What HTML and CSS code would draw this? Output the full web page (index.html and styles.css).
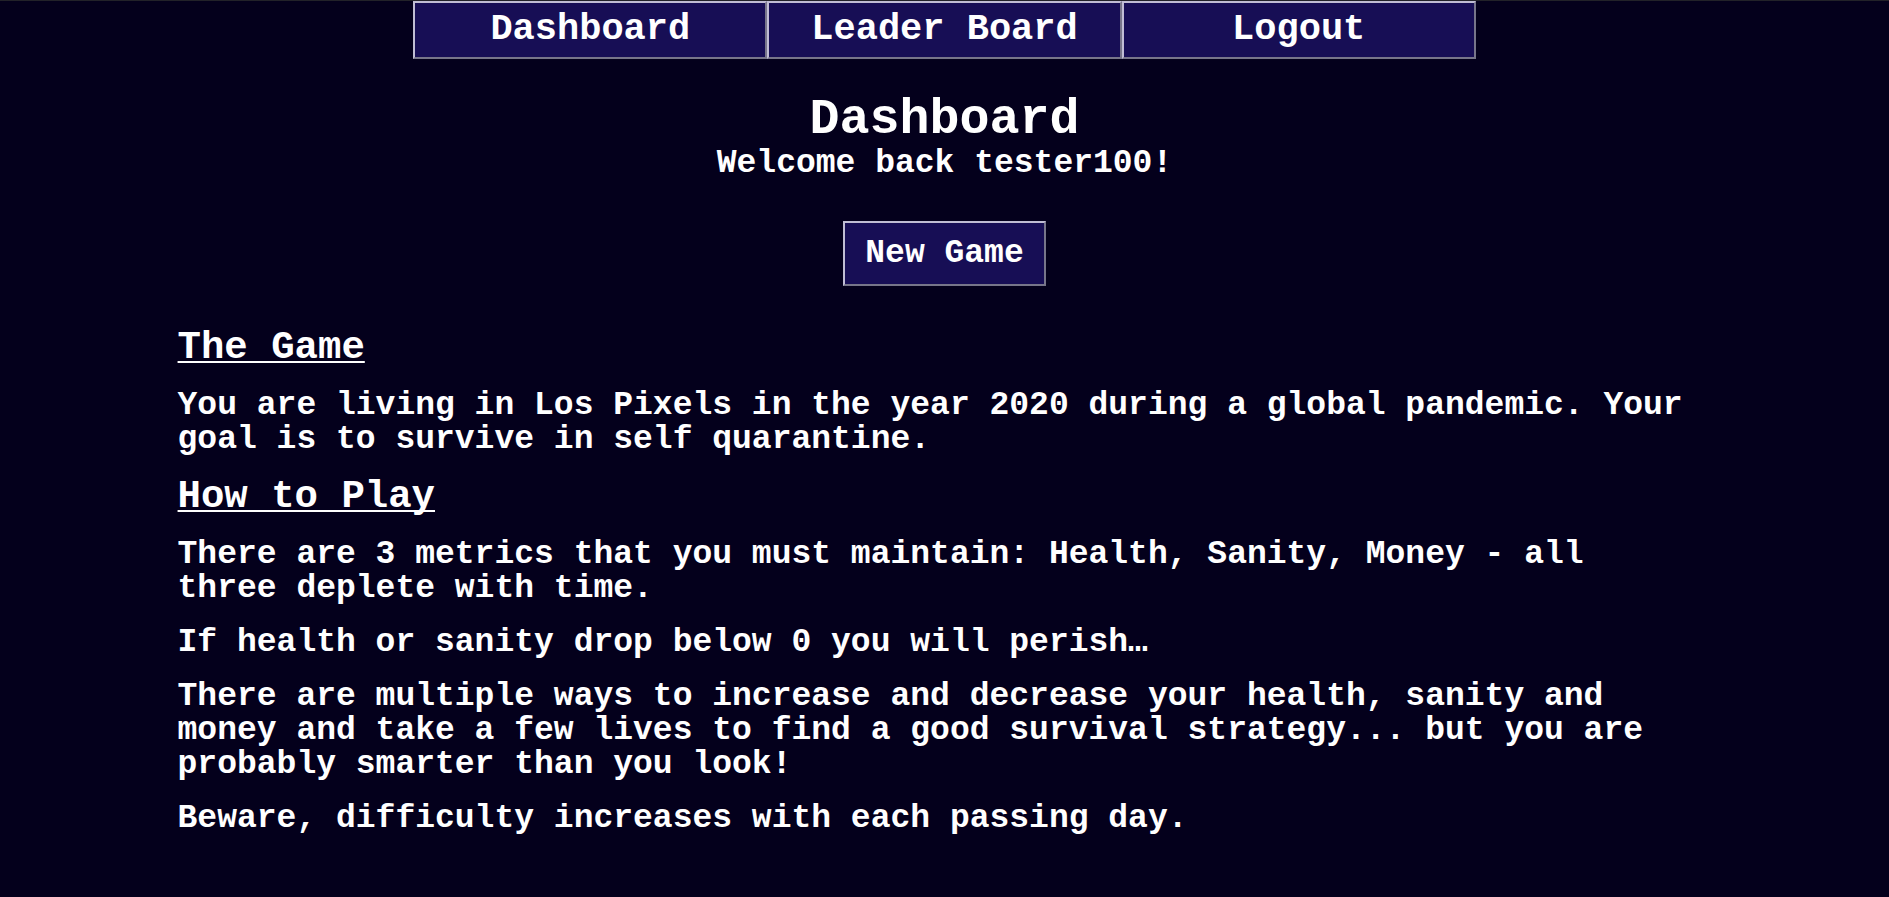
FILE: index.html
```html
<!DOCTYPE html>
<html lang="en">
<head>
<meta charset="utf-8">
<meta name="viewport" content="width=device-width, initial-scale=1">
<title>Dashboard</title>
<link rel="stylesheet" href="styles.css">
</head>
<body>
<nav class="nav">
  <button class="btn nav-btn" type="button">Dashboard</button>
  <button class="btn nav-btn" type="button">Leader Board</button>
  <button class="btn nav-btn" type="button">Logout</button>
</nav>
<main>
  <header class="intro">
    <h1>Dashboard</h1>
    <p>Welcome back tester100!</p>
    <button class="btn new-game" type="button">New Game</button>
  </header>
  <section class="guide">
    <h2>The Game</h2>
    <p>You are living in Los Pixels in the year 2020 during a global pandemic. Your goal is to survive in self quarantine.</p>
    <h2>How to Play</h2>
    <p>There are 3 metrics that you must maintain: Health, Sanity, Money - all three deplete with time.</p>
    <p>If health or sanity drop below 0 you will perish…</p>
    <p>There are multiple ways to increase and decrease your health, sanity and money and take a few lives to find a good survival strategy... but you are probably smarter than you look!</p>
    <p>Beware, difficulty increases with each passing day.</p>
  </section>
</main>
</body>
</html>
```
FILE: styles.css
```css
* {
  box-sizing: border-box;
}

body {
  margin: 0;
  min-height: 100vh;
  border-top: 1px solid #222229;
  background: #04001c;
  color: #fff;
  font: bold 33px/34px "Liberation Mono", monospace;
}

h1,
h2,
p {
  margin: 0;
}

.btn {
  border: 2px solid;
  border-color: #c0bdd4 #77758a #77758a #c0bdd4;
  background: #170e55;
  color: #fff;
  font: inherit;
  cursor: pointer;
}

.nav {
  display: grid;
  grid-template-columns: repeat(3, 1fr);
  width: 56.25%;
  margin: 0 auto;
}

.nav-btn {
  padding: 8px 0 10px;
  font-size: 37px;
  line-height: 36px;
}

.intro {
  display: flex;
  flex-direction: column;
  align-items: center;
  padding-top: 34px;
}

h1 {
  font-size: 50px;
  line-height: 54px;
}

.new-game {
  margin: 40px 0 42px;
  padding: 14px 20px;
  line-height: 33px;
}

.guide {
  display: flex;
  flex-direction: column;
  align-items: flex-start;
  gap: 20px;
  padding: 0 10% 40px 9.4%;
}

h2 {
  font-size: 39px;
  line-height: 41px;
  text-decoration: underline;
  text-decoration-thickness: 2px;
  text-underline-offset: 3px;
  text-decoration-skip-ink: none;
}
```
